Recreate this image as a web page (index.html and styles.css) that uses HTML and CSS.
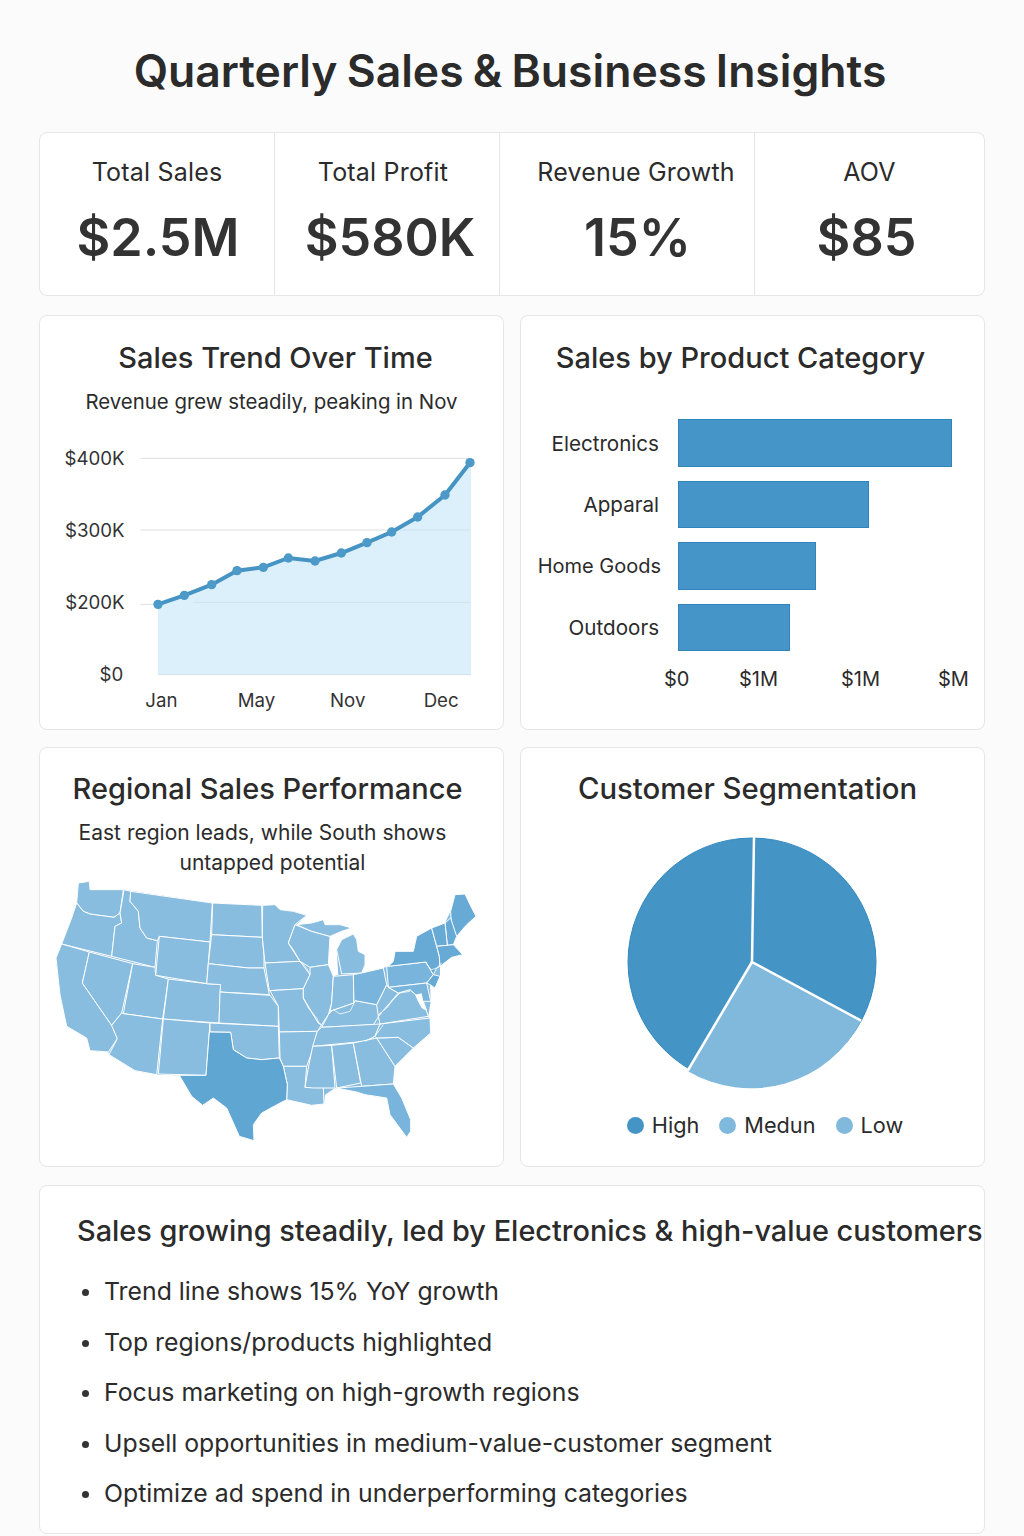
FILE: index.html
```html
<!DOCTYPE html>
<html lang="en">
<head>
    <meta charset="UTF-8">
    <title>Quarterly Sales &amp; Business Insights</title>
    <link rel="stylesheet" href="styles.css">
</head>
<body>
    <h1 class="page-title">Quarterly Sales &amp; Business Insights</h1>

    <div class="stats-row">
        <div class="stat-box stat-sales">
            <div class="stat-label">Total Sales</div>
            <div class="stat-value">$2.5M</div>
        </div>
        <div class="stat-box stat-profit">
            <div class="stat-label">Total Profit</div>
            <div class="stat-value">$580K</div>
        </div>
        <div class="stat-box stat-growth">
            <div class="stat-label">Revenue Growth</div>
            <div class="stat-value">15%</div>
        </div>
        <div class="stat-box stat-aov">
            <div class="stat-label">AOV</div>
            <div class="stat-value">$85</div>
        </div>
    </div>

    <div class="chart-grid">
        <div class="card card-trend">
            <h2>Sales Trend Over Time</h2>
            <p class="note">Revenue grew steadily, peaking in Nov</p>
            <svg class="trend-chart" viewBox="0 0 1350 870" width="450" height="290">
                <g class="grid-lines">
                    <line x1="302" y1="85" x2="1292" y2="85"/>
                    <line x1="302" y1="300" x2="1292" y2="300"/>
                    <line x1="302" y1="523" x2="354" y2="523"/>
                </g>
                <polygon class="trend-area" points="354,523 433,496 515,464 591,422 670,412 745,384 825,393 904,369 981,338 1055,306 1133,261 1215,195 1290,98 1293,98 1293,734 354,734"/>
                <line class="trend-grid-over" x1="460" y1="517" x2="1292" y2="517"/>
                <line class="trend-grid-over" x1="1060" y1="300" x2="1292" y2="300"/>
                <line class="trend-grid-over" x1="354" y1="734" x2="1293" y2="734"/>
                <polyline class="trend-line" points="354,523 433,496 515,464 591,422 670,412 745,384 825,393 904,369 981,338 1055,306 1133,261 1215,195 1290,98"/>
                <g class="trend-dots">
                    <circle cx="354" cy="523" r="13"/>
                    <circle cx="433" cy="496" r="13"/>
                    <circle cx="515" cy="464" r="13"/>
                    <circle cx="591" cy="422" r="13"/>
                    <circle cx="670" cy="412" r="13"/>
                    <circle cx="745" cy="384" r="13"/>
                    <circle cx="825" cy="393" r="13"/>
                    <circle cx="904" cy="369" r="13"/>
                    <circle cx="981" cy="338" r="13"/>
                    <circle cx="1055" cy="306" r="13"/>
                    <circle cx="1133" cy="261" r="13"/>
                    <circle cx="1215" cy="195" r="13"/>
                    <circle cx="1290" cy="98" r="13"/>
                </g>
                <g class="axis-text axis-y">
                    <text x="254" y="105">$400K</text>
                    <text x="254" y="322">$300K</text>
                    <text x="254" y="538">$200K</text>
                    <text x="250" y="753">$0</text>
                </g>
                <g class="axis-text">
                    <text x="316" y="831">Jan</text>
                    <text x="593" y="831">May</text>
                    <text x="870" y="831">Nov</text>
                    <text x="1151" y="831">Dec</text>
                </g>
            </svg>
        </div>

        <div class="card card-category">
            <h2>Sales by Product Category</h2>
            <div class="bars">
                <div class="bar-row">
                    <span class="bar-label">Electronics</span>
                    <div class="bar" style="width: 274px"></div>
                </div>
                <div class="bar-row">
                    <span class="bar-label">Apparal</span>
                    <div class="bar" style="width: 191px"></div>
                </div>
                <div class="bar-row">
                    <span class="bar-label bar-label-tight">Home Goods</span>
                    <div class="bar" style="width: 138px"></div>
                </div>
                <div class="bar-row">
                    <span class="bar-label">Outdoors</span>
                    <div class="bar" style="width: 112px"></div>
                </div>
            </div>
            <div class="bar-axis">
                <span>$0</span>
                <span>$1M</span>
                <span>$1M</span>
                <span>$M</span>
            </div>
        </div>

        <div class="card card-region">
            <h2>Regional Sales Performance</h2>
            <p class="note">East region leads, while South shows<span class="note-line">untapped potential</span></p>
            <svg class="us-map" viewBox="0 30 1350 840" width="450" height="280">
                <polygon class="us-outline" points="115,45 148,40 150,65 250,65 517,105 665,112 705,110 720,125 760,130 800,142 770,170 815,165 850,155 855,170 900,170 935,180 905,190 870,205 865,290 880,325 895,320 890,245 905,215 940,198 950,215 955,250 975,260 975,290 965,315 1030,300 1045,295 1060,280 1065,250 1120,250 1130,205 1175,180 1215,165 1232,130 1245,80 1275,78 1290,110 1308,145 1280,170 1250,205 1240,230 1268,260 1235,268 1200,295 1200,325 1185,360 1170,350 1172,400 1165,445 1172,495 1120,540 1065,595 1060,648 1085,690 1112,755 1112,790 1100,808 1050,740 1040,690 975,680 950,672 885,660 855,680 852,708 815,712 740,695 720,705 665,735 640,770 642,818 598,805 560,720 520,690 488,712 455,685 418,622 355,620 285,608 207,560 205,552 150,548 140,510 80,475 60,380 48,270 65,228 95,150 110,105"/>
                <g class="states">
                    <polygon points="115,45 148,40 150,65 250,65 240,135 222,148 150,138 130,130 110,105"/>
                    <polygon points="110,105 130,130 150,138 222,148 240,135 245,165 225,175 215,265 65,228 95,150"/>
                    <polygon points="65,228 148,252 127,345 215,472 232,512 205,552 150,548 140,510 80,475 60,380 48,270"/>
                    <polygon points="148,252 278,287 245,435 215,472 127,345"/>
                    <polygon points="252,65 272,70 270,100 295,130 300,180 320,210 352,218 345,298 215,265 225,175 245,165 240,135"/>
                    <polygon points="272,70 517,105 510,222 358,205 352,218 320,210 300,180 295,130 270,100"/>
                    <polygon points="358,205 510,222 500,347 347,322"/>
                    <polygon points="278,287 345,298 347,322 385,333 368,453 250,437"/>
                    <polygon points="385,333 500,347 542,350 537,465 370,453"/>
                    <polygon points="250,437 368,453 350,620 285,608 207,560 232,512 215,472 245,435"/>
                    <polygon points="370,453 510,465 508,492 498,622 355,618"/>
                    <polygon points="518,105 665,112 667,208 515,200"/>
                    <polygon points="515,200 667,208 672,265 672,300 625,300 505,287"/>
                    <polygon points="505,287 625,300 672,300 688,380 540,372 542,350 500,347"/>
                    <polygon points="540,372 690,382 715,415 715,475 537,465"/>
                    <polygon points="510,465 715,475 718,570 665,575 620,570 580,545 572,493 510,492"/>
                    <polygon points="668,112 705,110 720,125 760,130 800,142 765,170 745,225 780,280 675,285 667,208"/>
                    <polygon points="675,285 780,280 810,320 790,362 688,368"/>
                    <polygon points="690,368 790,362 790,390 835,465 845,470 832,490 718,492 715,415"/>
                    <polygon points="718,492 832,490 820,540 800,595 730,595 720,570"/>
                    <polygon points="730,595 800,595 795,658 850,658 852,708 815,712 740,695 742,650"/>
                    <polygon points="765,170 815,190 870,205 865,290 810,298 780,280 745,225"/>
                    <polygon points="810,298 865,290 880,325 875,405 865,440 845,470 835,465 790,390 790,362 810,320"/>
                    <polygon points="890,245 905,215 940,198 950,215 955,250 975,260 975,290 965,315 905,318"/>
                    <polygon points="770,170 815,165 850,155 855,170 900,170 935,180 905,190 870,205 815,190"/>
                    <polygon points="880,325 940,320 942,405 870,430 875,405"/>
                    <polygon points="870,430 942,405 945,398 1010,410 1020,440 1000,470 845,478 865,440"/>
                    <polygon points="845,478 1020,468 1005,505 975,520 818,535 832,490"/>
                    <polygon points="818,535 875,532 885,660 820,660 795,658 805,600"/>
                    <polygon points="875,532 940,525 962,645 890,660"/>
                    <polygon points="940,525 1010,510 1065,595 1060,648 965,655"/>
                    <polygon points="1010,510 1075,508 1120,540 1065,595"/>
                    <polygon points="1020,468 1170,450 1172,495 1120,540 1075,508 1010,510 1005,505"/>
                    <polygon points="1015,445 1075,375 1110,365 1150,400 1165,445 1020,468"/>
                    <polygon points="1010,410 1040,350 1045,358 1075,375 1015,445"/>
                </g>
                <g class="states states-mid">
                    <polygon points="940,320 965,315 1030,300 1040,350 1010,410 945,398 942,405"/>
                    <polygon points="965,655 1060,648 1085,690 1112,755 1112,790 1100,808 1050,740 1040,690 975,680 950,672 890,660"/>
                    <polygon points="1040,295 1158,282 1180,320 1160,345 1045,358"/>
                    <polygon points="1075,375 1045,358 1160,345 1172,400 1150,400 1110,365"/>
                </g>
                <g class="states states-dark">
                    <polygon points="1045,295 1060,280 1065,250 1120,250 1130,205 1175,180 1190,235 1198,265 1200,295 1190,300 1180,320 1158,282"/>
                    <polygon points="1232,130 1245,80 1275,78 1290,110 1308,145 1280,170 1250,205 1235,190"/>
                    <polygon points="1215,165 1232,150 1250,205 1240,230 1222,232"/>
                    <polygon points="1175,180 1215,165 1222,232 1190,235"/>
                    <polygon points="1190,235 1240,230 1268,260 1235,268 1200,295 1198,265"/>
                    <polygon points="1180,320 1200,325 1185,360 1170,350 1160,345"/>
                    <polygon class="state-texas" points="508,492 572,493 580,545 620,570 665,575 718,570 730,595 742,650 740,695 720,705 665,735 640,770 642,818 598,805 560,720 520,690 488,712 455,685 418,622 498,622"/>
                </g>
                <g class="rivers">
                    <polyline points="865,440 880,425 900,438 930,430 945,400"/>
                    <polyline points="1015,440 1040,420 1060,395 1080,375 1110,370"/>
                    <polyline points="790,390 805,420 830,450 840,470"/>
                    <polyline points="1030,470 1005,505 975,520"/>
                    <polyline points="745,225 760,245 780,280 800,300 810,320"/>
                    <polyline points="1160,290 1175,305 1190,300 1205,285"/>
                </g>
                <polygon class="bay" points="1125,380 1145,376 1150,400 1162,430 1145,420 1135,402"/>
            </svg>
        </div>

        <div class="card card-segment">
            <h2>Customer Segmentation</h2>
            <svg class="pie" viewBox="0 0 320 270" width="320" height="270">
                <circle class="slice-dark" cx="152" cy="132" r="124"/>
                <path class="slice-light" d="M152 132 L261.2 190.7 A124 124 0 0 1 87.5 241 Z"/>
                <polyline class="slice-gap" points="154,7 152,132 261.2,190.7"/>
                <line class="slice-gap" x1="152" y1="132" x2="87.5" y2="241"/>
            </svg>
            <div class="legend">
                <span class="legend-item"><i class="dot dot-high"></i>High</span>
                <span class="legend-item"><i class="dot dot-low"></i>Medun</span>
                <span class="legend-item"><i class="dot dot-low"></i>Low</span>
            </div>
        </div>
    </div>

    <div class="card card-summary">
        <h2>Sales growing steadily, led by Electronics &amp; high-value customers</h2>
        <ul>
            <li>Trend line shows 15% YoY growth</li>
            <li>Top regions/products highlighted</li>
            <li>Focus marketing on high-growth regions</li>
            <li>Upsell opportunities in medium-value-customer segment</li>
            <li>Optimize ad spend in underperforming categories</li>
        </ul>
    </div>
</body>
</html>
```

FILE: styles.css
```css
body {
    font-family: Inter, 'Liberation Sans', sans-serif;
    color: #2b2b2b;
    background-color: #fbfbfb;
    margin: 0;
    padding: 0 39px;
}

h1, h2, p, ul {
    margin: 0;
}

.page-title {
    height: 132px;
    line-height: 143px;
    font-size: 44.5px;
    font-weight: 600;
    word-spacing: -2px;
    text-align: center;
    white-space: nowrap;
    padding-right: 4px;
    box-sizing: border-box;
}

.stats-row {
    display: grid;
    grid-template-columns: 236px 225px 255px 230px;
    height: 164px;
    margin-bottom: 19px;
}

.stat-box {
    background-color: white;
    border: 1px solid #e6e6e6;
    border-left-width: 0;
    text-align: center;
    padding-top: 24px;
    box-sizing: border-box;
}

.stat-box:first-child {
    border-left-width: 1px;
    border-radius: 8px 0 0 8px;
}

.stat-box:last-child {
    border-radius: 0 8px 8px 0;
}

.stat-growth {
    padding-left: 18px;
}

.stat-label {
    font-size: 25px;
    letter-spacing: 0.2px;
    line-height: 30px;
}

.stat-value {
    font-size: 52px;
    font-weight: 600;
    line-height: 62px;
    margin-top: 20px;
    color: #333;
}

.stat-profit .stat-label {
    padding-right: 8px;
}

.stat-profit .stat-value {
    padding-left: 6px;
}

.stat-sales .stat-value {
    padding-left: 2px;
}

.stat-growth .stat-value {
    padding-left: 3px;
}

.stat-aov .stat-value {
    padding-right: 6px;
}

.chart-grid {
    display: grid;
    grid-template-columns: 465px 465px;
    grid-template-rows: 415px 420px;
    gap: 17px 16px;
    margin-bottom: 18px;
}

.card {
    background-color: white;
    border: 1px solid #e6e6e6;
    border-radius: 8px;
    box-sizing: border-box;
}

.card h2 {
    font-size: 29px;
    font-weight: 500;
    line-height: 36px;
    text-align: center;
    white-space: nowrap;
}

.note {
    font-size: 21px;
    line-height: 30px;
    text-align: center;
}

.note-line {
    display: block;
    padding-left: 20px;
}

.card-trend {
    padding-top: 24px;
}

.card-trend h2 {
    padding-left: 8px;
}

.card-trend .note {
    margin-top: 11px;
    font-size: 20.4px;
}

.trend-chart {
    display: block;
    margin-top: 13px;
}

.grid-lines line {
    stroke: #dedede;
    stroke-width: 3;
}

.trend-area {
    fill: #dcf0fb;
}

.trend-grid-over {
    stroke: #cfe0ea;
    stroke-width: 3;
}

.trend-line {
    fill: none;
    stroke: #4594c4;
    stroke-width: 12;
}

.trend-dots circle {
    fill: #4d9ac8;
    r: 14px;
}

.axis-text text {
    font-size: 56px;
    fill: #333;
}

.axis-y text {
    text-anchor: end;
}

.card-category {
    padding-top: 24px;
}

.card-category h2 {
    padding-right: 24px;
}

.bars {
    display: flex;
    flex-direction: column;
    gap: 14px;
    margin-top: 43px;
}

.bar-row {
    display: grid;
    grid-template-columns: 138px auto;
    column-gap: 19px;
    align-items: center;
    justify-content: start;
}

.bar-label {
    font-size: 20.6px;
    text-align: right;
    white-space: nowrap;
    padding-top: 1px;
}

.bar-label-tight {
    font-size: 20px;
    margin-right: -2px;
}

.bar {
    height: 47.5px;
    background-color: #4695c8;
    border: 1px solid #2f84c0;
    box-sizing: border-box;
}

.bar-axis {
    display: grid;
    grid-template-columns: 75px 102px 97px auto;
    margin: 16px 0 0 143px;
    font-size: 20px;
}

.card-region {
    padding-top: 23px;
}

.card-region h2 {
    padding-right: 8px;
}

.card-region .note {
    margin-top: 11px;
    padding-right: 18px;
}

.us-map {
    display: block;
}

.us-outline {
    fill: #88bde0;
}

.states polygon {
    fill: #88bde0;
    stroke: white;
    stroke-width: 3;
    stroke-linejoin: round;
}

.states-mid polygon {
    fill: #78b4db;
}

.states-dark polygon {
    fill: #68aad6;
}

.states-dark .state-texas {
    fill: #5fa6d2;
}

.rivers polyline {
    fill: none;
    stroke: white;
    stroke-width: 3;
    opacity: 0.75;
}

.bay {
    fill: white;
}

.card-segment {
    padding-top: 23px;
    display: flex;
    flex-direction: column;
    align-items: center;
}

.card-segment h2 {
    padding-right: 10px;
    font-size: 29.3px;
}

.pie {
    display: block;
    align-self: flex-start;
    margin-left: 79px;
    margin-top: 23px;
}

.slice-dark {
    fill: #4594c6;
    stroke: #3288c0;
    stroke-width: 1;
}

.slice-light {
    fill: #81b9dc;
}

.slice-gap {
    fill: none;
    stroke: white;
    stroke-width: 2.5;
}

.legend {
    display: flex;
    gap: 20px;
    font-size: 21.7px;
    margin-top: 12px;
    padding-left: 25px;
}

.legend-item {
    display: flex;
    align-items: center;
    gap: 8px;
}

.dot {
    width: 17px;
    height: 17px;
    border-radius: 50%;
}

.dot-high {
    background-color: #4594c6;
}

.dot-low {
    background-color: #81b9dc;
}

.card-summary {
    height: 349px;
    padding: 27px 0 0 37px;
}

.card-summary h2 {
    text-align: left;
    font-size: 28.9px;
}

.card-summary ul {
    list-style: none;
    padding: 0;
    margin-top: 17px;
}

.card-summary li {
    position: relative;
    font-size: 24.8px;
    line-height: 50.6px;
    padding-left: 27px;
}

.card-summary li::before {
    content: "";
    position: absolute;
    left: 5px;
    top: 23px;
    width: 7px;
    height: 7px;
    border-radius: 50%;
    background-color: #333;
}
```
